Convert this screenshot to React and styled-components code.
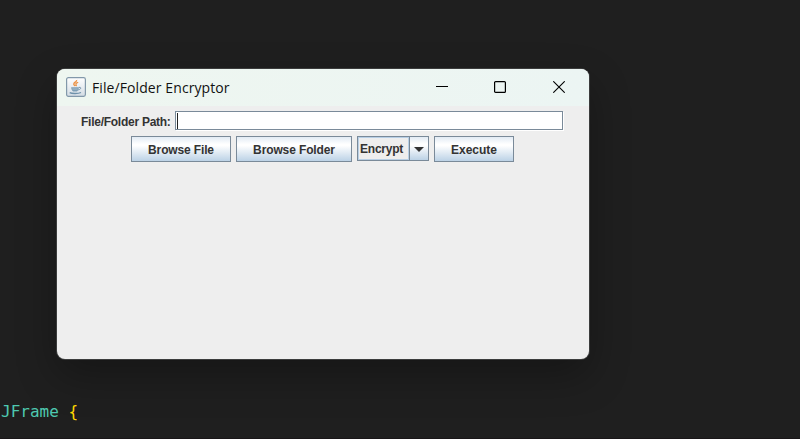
import React from "react";
import styled, { createGlobalStyle } from "styled-components";

const GlobalStyle = createGlobalStyle`
  * { box-sizing: border-box; }
  body { margin: 0; background: #1f1f1f; overflow: hidden; }
`;

const Desktop = styled.main`
  display: flex;
  flex-direction: column;
  align-items: flex-start;
  width: 800px;
  height: 439px;
  padding-top: 69px;
  overflow: hidden;
  background: #1f1f1f;
  border-bottom: 1px solid #191618;
`;

const Window = styled.section`
  width: 532px;
  height: 290px;
  margin-left: 57px;
  flex: none;
  overflow: hidden;
  border-radius: 8px;
  background: #eeeeee;
  box-shadow: 0 0 0 1px #3b3c3c, 0 16px 40px rgba(0, 0, 0, 0.3);
`;

const TitleBar = styled.header`
  display: flex;
  align-items: center;
  height: 37px;
  padding: 0 1px 0 9px;
  background: linear-gradient(90deg, #eef6f0, #ecf5f3);
`;

const Title = styled.h1`
  flex: 1;
  margin: 1px 0 0 6px;
  font: 400 14px/20px "Open Sans", "Noto Sans", sans-serif;
  letter-spacing: 0.09px;
  color: #111;
  white-space: nowrap;
`;

const WindowControl = styled.button`
  display: flex;
  align-items: center;
  justify-content: center;
  width: 58.5px;
  height: 36px;
  padding: 0 0 1px;
  border: 0;
  background: none;
`;

const Content = styled.div`
  display: flex;
  flex-direction: column;
  align-items: center;
  gap: 5px;
  padding-top: 5px;
`;

const Row = styled.div`
  display: flex;
  align-items: flex-start;
  gap: 5px;
  padding-right: 1px;
`;

const PathRow = styled(Row)`
  height: 20px;
  padding-right: 3px;
`;

const Caption = styled.span`
  display: block;
  width: ${(p) => p.$width}px;
  font: 700 12px/16px "Liberation Sans", Arial, sans-serif;
  letter-spacing: ${(p) => p.$tracking || 0}px;
  color: #333333;
  white-space: nowrap;
`;

const PathLabel = styled(Caption)`
  margin-top: 3px;
  padding-left: 1px;
`;

const PathField = styled.div`
  display: flex;
  align-items: center;
  width: 388px;
  height: 19px;
  padding-left: 1px;
  background: #fff;
  border: 1px solid #7a8a99;
  box-shadow: 1px 1px 0 #fff;
`;

const Caret = styled.span`
  width: 1px;
  height: 16px;
  background: #222;
`;

const MetalButton = styled.button`
  display: flex;
  align-items: center;
  justify-content: center;
  width: ${(p) => p.$width}px;
  height: 26px;
  padding: 2px 0 0;
  border: 1px solid #7a8a99;
  background: linear-gradient(#e2ebf4 0%, #ffffff 30%, #ffffff 36%, #bcd2e6 100%);
`;

const ComboBox = styled.div`
  display: flex;
  width: 72px;
  height: 25px;
  border: 1px solid #7a8a99;
  background: #eeeeee;
`;

const ComboValue = styled.div`
  display: flex;
  align-items: center;
  flex: 1;
  min-width: 0;
  padding-left: 1px;
  border: 1px solid #b8cfe5;
`;

const ComboArrow = styled.div`
  display: flex;
  flex: none;
  align-items: center;
  justify-content: center;
  width: 19px;
  padding-top: 1px;
  border-left: 1px solid #7a8a99;
  background: linear-gradient(#e2ebf4 0%, #ffffff 30%, #ffffff 36%, #bcd2e6 100%);
`;

const CodeLine = styled.code`
  margin: 42px 0 0 1px;
  font: 16px/21px "DejaVu Sans Mono", monospace;
  color: #4ec9b0;
  white-space: pre;
`;

const Brace = styled.span`
  color: #ffd700;
`;

const AppIcon = styled.svg`
  flex: none;
  margin-bottom: 2px;
`;

function JavaIcon() {
  return (
    <AppIcon width="20" height="20" viewBox="0 0 20 20" fill="none">
      <defs>
        <linearGradient id="tile" x1="0" y1="0" x2="0" y2="1">
          <stop stopColor="#ffffff" />
          <stop offset="1" stopColor="#d3dce4" />
        </linearGradient>
      </defs>
      <rect x=".6" y=".6" width="18.8" height="18.8" rx="1.8" fill="url(#tile)" stroke="#8298aa" strokeWidth="1.2" />
      <path d="M10.6 3C11 5 7.6 5.3 7.8 7.2c.1 1 1.1 1.2 1.2 2M12.2 5.4C10.5 5.9 9.6 6.5 10 7.3c.5.7.4 1.2-.2 1.8" stroke="#ec9448" strokeWidth="1.4" />
      <path d="M5.2 10.3h7.6c0 2-.7 3.7-1.9 4.2H7.1c-1.2-.6-1.9-2.3-1.9-4.2z" fill="#7e9fb6" />
      <path d="M6.3 12h5.4" stroke="#b9cad6" strokeWidth=".7" />
      <path d="M12.8 10.4c2.8-.6 2.6 1.8-.5 2.5" stroke="#7394ac" />
      <path d="M3.7 15.7c2.2 1.1 8.6 1.1 11.3-.2" stroke="#6e91aa" strokeWidth="1.3" />
    </AppIcon>
  );
}

export default function App() {
  return (
    <>
      <GlobalStyle />
      <Desktop>
        <Window>
          <TitleBar>
            <JavaIcon />
            <Title>File/Folder Encryptor</Title>
            <WindowControl aria-label="Minimize">
              <svg width="12" height="12"><path d="M0 5.5h12" stroke="#000" /></svg>
            </WindowControl>
            <WindowControl aria-label="Maximize">
              <svg width="12" height="12"><rect x=".6" y=".6" width="10.8" height="10.8" rx="1" fill="none" stroke="#000" strokeWidth="1.2" /></svg>
            </WindowControl>
            <WindowControl aria-label="Close">
              <svg width="12" height="12"><path d="M.3.3l11.4 11.4M11.7.3L.3 11.7" stroke="#000" strokeWidth="1.1" /></svg>
            </WindowControl>
          </TitleBar>
          <Content>
            <PathRow>
              <PathLabel $width={90} $tracking={-0.26}>File/Folder Path:</PathLabel>
              <PathField><Caret /></PathField>
            </PathRow>
            <Row>
              <MetalButton $width={100}><Caption $width={66} $tracking={-0.14}>Browse File</Caption></MetalButton>
              <MetalButton $width={116}><Caption $width={82} $tracking={-0.12}>Browse Folder</Caption></MetalButton>
              <ComboBox>
                <ComboValue><Caption $width={44} $tracking={-0.22}>Encrypt</Caption></ComboValue>
                <ComboArrow>
                  <svg width="10" height="5"><path d="M0 0h10L5 5z" fill="#333" /></svg>
                </ComboArrow>
              </ComboBox>
              <MetalButton $width={80}><Caption $width={46}>Execute</Caption></MetalButton>
            </Row>
          </Content>
        </Window>
        <CodeLine>JFrame <Brace>{"{"}</Brace></CodeLine>
      </Desktop>
    </>
  );
}
